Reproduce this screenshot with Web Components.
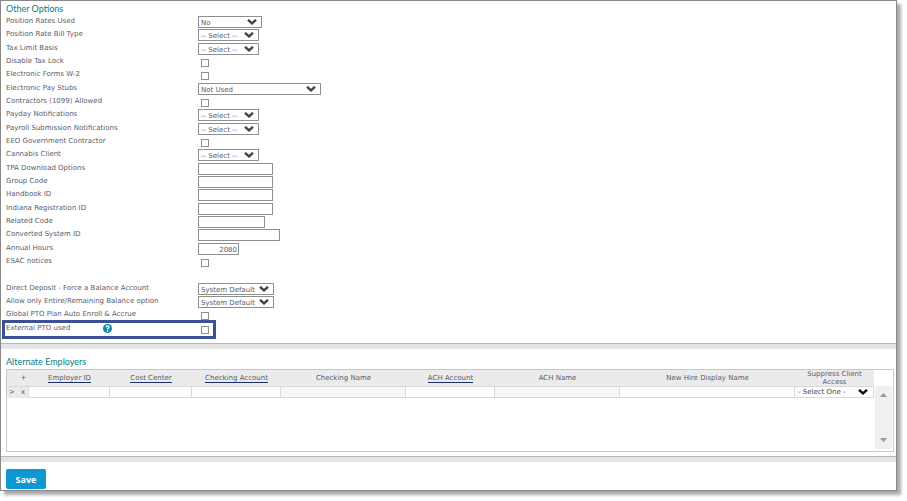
<!DOCTYPE html>
<html lang="en">
<head>
  <meta charset="utf-8">
  <meta name="viewport" content="width=device-width, initial-scale=1">
  <title>Client Options</title>
  <style>
    body {
      margin: 0;
      background: #fff;
      color: #585c6b;
      font-family: "DejaVu Sans", Verdana, sans-serif;
      font-size: 7px;
      --title-font: Lato, "Open Sans", sans-serif;
      --teal: #007f8a;
      --line: #8f8f8f;
    }
  </style>
</head>
<body>
  <client-page>
    <option-section heading="Other Options">
      <option-row label="Position Rates Used" type="select" value="No" size="64"></option-row>
      <option-row label="Position Rate Bill Type" type="select" value="-- Select --" size="61"></option-row>
      <option-row label="Tax Limit Basis" type="select" value="-- Select --" size="61"></option-row>
      <option-row label="Disable Tax Lock" type="checkbox"></option-row>
      <option-row label="Electronic Forms W-2" type="checkbox"></option-row>
      <option-row label="Electronic Pay Stubs" type="select" value="Not Used" size="123"></option-row>
      <option-row label="Contractors (1099) Allowed" type="checkbox"></option-row>
      <option-row label="Payday Notifications" type="select" value="-- Select --" size="61"></option-row>
      <option-row label="Payroll Submission Notifications" type="select" value="-- Select --" size="61"></option-row>
      <option-row label="EEO Government Contractor" type="checkbox"></option-row>
      <option-row label="Cannabis Client" type="select" value="-- Select --" size="61"></option-row>
      <option-row label="TPA Download Options" type="text" size="75"></option-row>
      <option-row label="Group Code" type="text" size="75"></option-row>
      <option-row label="Handbook ID" type="text" size="75"></option-row>
      <option-row label="Indiana Registration ID" type="text" size="75"></option-row>
      <option-row label="Related Code" type="text" size="67"></option-row>
      <option-row label="Converted System ID" type="text" size="82"></option-row>
      <option-row label="Annual Hours" type="text" value="2080" size="41" numeric></option-row>
      <option-row label="ESAC notices" type="checkbox"></option-row>
      <div></div>
      <option-row label="Direct Deposit - Force a Balance Account" type="select" value="System Default" size="76"></option-row>
      <option-row label="Allow only Entire/Remaining Balance option" type="select" value="System Default" size="76"></option-row>
      <option-row label="Global PTO Plan Auto Enroll &amp; Accrue" type="checkbox"></option-row>
      <option-row label="External PTO used" type="checkbox" help highlight></option-row>
    </option-section>
    <section-divider></section-divider>
    <employer-grid heading="Alternate Employers"></employer-grid>
    <section-divider></section-divider>
    <save-bar>Save</save-bar>
  </client-page>

  <script>
    const chevron = /* html */`
      <svg class="chevron" viewBox="0 0 10 6" aria-hidden="true">
        <path d="M1 0.8 L5 4.4 L9 0.8" fill="none" stroke="currentColor" stroke-width="2.4"/>
      </svg>`;

    class ClientPage extends HTMLElement {
      constructor() {
        super();
        this.attachShadow({ mode: "open" });
      }

      static get styles() {
        return /* css */`
          :host {
            display: flow-root;
            padding: 0 10px 10px 0;
          }

          .panel {
            border: 1px solid #888;
            background: #fff;
            box-shadow: 4px 4px 3px #0005;
          }
        `;
      }

      connectedCallback() {
        this.shadowRoot.innerHTML = /* html */`
        <style>${ClientPage.styles}</style>
        <div class="panel"><slot></slot></div>`;
      }
    }

    class OptionSection extends HTMLElement {
      constructor() {
        super();
        this.attachShadow({ mode: "open" });
      }

      static get styles() {
        return /* css */`
          :host {
            display: block;
            padding: 2px 5px 9px;
          }

          h2 {
            margin: 0;
            font-family: var(--title-font);
            font-size: 9px;
            font-weight: 400;
            line-height: 11px;
            color: var(--teal);
          }

          .rows {
            display: grid;
            grid-auto-rows: 13px 14px 13px;
          }
        `;
      }

      connectedCallback() {
        this.shadowRoot.innerHTML = /* html */`
        <style>${OptionSection.styles}</style>
        <h2>${this.getAttribute("heading")}</h2>
        <div class="rows"><slot></slot></div>`;
      }
    }

    class OptionRow extends HTMLElement {
      constructor() {
        super();
        this.attachShadow({ mode: "open" });
      }

      static get styles() {
        return /* css */`
          :host {
            display: grid;
            grid-template-columns: 192px 1fr;
            align-items: start;
            position: relative;
          }

          :host([highlight])::after {
            content: "";
            position: absolute;
            top: -1px;
            left: -4px;
            box-sizing: border-box;
            width: 214px;
            height: 19px;
            border: 3px solid #3b5196;
            pointer-events: none;
          }

          .name {
            display: grid;
            grid-template-columns: 97px auto;
            justify-content: start;
            line-height: 15px;
            white-space: nowrap;
          }

          .help {
            display: flex;
            margin-top: 3px;
            padding: 0;
            border: 0;
            background: none;

            & svg {
              width: 9px;
              height: 9px;
            }
          }

          .control {
            display: flex;
            position: relative;
            width: fit-content;
            margin-top: 2px;
          }

          select,
          .text {
            appearance: none;
            box-sizing: border-box;
            height: 12px;
            margin: 0;
            padding: 1px 2px 0;
            border: 1px solid var(--line);
            border-radius: 0;
            background: #fff;
            color: inherit;
            font: inherit;
          }

          :host([numeric]) .text {
            padding-right: 1px;
            text-align: right;
          }

          .check {
            appearance: none;
            box-sizing: border-box;
            width: 8px;
            height: 8px;
            margin: 3px;
            border: 1px solid var(--line);
            background: #fff;

            &:checked {
              background: #0e98d0;
            }
          }

          .chevron {
            position: absolute;
            top: 3px;
            right: 5px;
            width: 10px;
            height: 6px;
            color: #42454d;
            pointer-events: none;
          }
        `;
      }

      get control() {
        const value = this.getAttribute("value") ?? "";
        const width = `style="width: ${this.getAttribute("size")}px"`;

        switch (this.getAttribute("type")) {
          case "select":
            return `<select id="field" ${width}><option>${value}</option></select>${chevron}`;
          case "checkbox":
            return `<input id="field" class="check" type="checkbox">`;
          default:
            return `<input id="field" class="text" type="text" value="${value}" ${width}>`;
        }
      }

      get help() {
        if (!this.hasAttribute("help")) return "";

        return /* html */`
        <button class="help" type="button" aria-label="Help">
          <svg viewBox="0 0 9 9">
            <circle cx="4.5" cy="4.5" r="4.5" fill="#0a86ad"/>
            <path d="M3 3.4 Q3.1 2 4.5 2 Q6 2 6 3.3 Q6 4 5.2 4.4 Q4.5 4.8 4.5 5.6" fill="none" stroke="#fff" stroke-width="1.3"/>
            <circle cx="4.5" cy="7.1" r="0.8" fill="#fff"/>
          </svg>
        </button>`;
      }

      connectedCallback() {
        this.shadowRoot.innerHTML = /* html */`
        <style>${OptionRow.styles}</style>
        <div class="name">
          <label for="field">${this.getAttribute("label").replace("&", "&amp;")}</label>
          ${this.help}
        </div>
        <div class="control">${this.control}</div>`;
      }
    }

    class SectionDivider extends HTMLElement {
      constructor() {
        super();
        this.attachShadow({ mode: "open" });
      }

      connectedCallback() {
        this.shadowRoot.innerHTML = /* html */`
        <style>
          :host {
            display: block;
            height: 5px;
            border-top: 1px solid #b8b8b8;
            background: #e4e4e4;
          }
        </style>`;
      }
    }

    class EmployerGrid extends HTMLElement {
      constructor() {
        super();
        this.attachShadow({ mode: "open" });
      }

      static get styles() {
        return /* css */`
          :host {
            display: block;
            padding: 7px 2px 4px 5px;
          }

          h2 {
            margin: 0 0 1px;
            font-family: var(--title-font);
            font-size: 9px;
            font-weight: 400;
            line-height: 12px;
            color: var(--teal);
          }

          .frame {
            display: grid;
            grid-template-columns: 1fr 17px;
            column-gap: 1px;
            padding-right: 1px;
            border: 1px solid #c8c8c8;
          }

          table {
            width: 100%;
            table-layout: fixed;
            border-collapse: separate;
            border-spacing: 0;
          }

          col {
            width: var(--w);
          }

          th,
          td {
            box-sizing: border-box;
            padding: 0;
            border-bottom: 1px solid #d8d8d8;
            font-weight: 400;
            text-align: center;
          }

          th {
            height: 17px;
            background: #ebebeb;
            line-height: 8px;
          }

          td {
            height: 11px;
            border-right: 1px solid #d8d8d8;
            line-height: 10px;
          }

          .tool {
            border-color: #ebebeb;
            background: #ebebeb;
          }

          .tool:nth-child(2) {
            border-right-color: #d8d8d8;
          }

          a {
            border-bottom: 1px solid #1c2f70;
            color: inherit;
            text-decoration: none;
          }

          button,
          input,
          select {
            appearance: none;
            display: block;
            box-sizing: border-box;
            width: 100%;
            height: 10px;
            margin: 0;
            padding: 0;
            border: 0;
            border-radius: 0;
            background: none;
            color: inherit;
            font: inherit;
          }

          input:disabled {
            background: #f7f7f7;
          }

          .pick {
            position: relative;
            color: #42454d;

            & select {
              padding-left: 3px;
            }

            & .chevron {
              position: absolute;
              top: 2px;
              right: 5px;
              width: 10px;
              height: 6px;
              color: #111;
              pointer-events: none;
            }
          }

          .scroll {
            display: flex;
            flex-direction: column;
            justify-content: space-between;
            align-items: center;
            height: 63px;
            margin: 16px 0 2px;
            padding: 7px 0;
            box-sizing: border-box;
            background: #f0f0f0;

            & svg {
              width: 7px;
              height: 4px;
              fill: #999;
            }
          }
        `;
      }

      get columns() {
        return [
          { name: "Employer ID", width: "81px", link: true },
          { name: "Cost Center", width: "82px", link: true },
          { name: "Checking Account", width: "89px", link: true },
          { name: "Checking Name", width: "125px", locked: true },
          { name: "ACH Account", width: "89px", link: true },
          { name: "ACH Name", width: "125px", locked: true },
          { name: "New Hire Display Name", width: "auto" }
        ];
      }

      connectedCallback() {
        const cols = this.columns.map(({ width }) => `<col style="--w: ${width}">`).join("");
        const heads = this.columns.map(({ name, link }) =>
          `<th scope="col">${link ? `<a href="#">${name}</a>` : name}</th>`).join("");
        const cells = this.columns.map(({ name, locked }) =>
          `<td><input type="text" aria-label="${name}" ${locked ? "disabled" : ""}></td>`).join("");

        this.shadowRoot.innerHTML = /* html */`
        <style>${EmployerGrid.styles}</style>
        <h2>${this.getAttribute("heading")}</h2>
        <div class="frame">
          <div>
            <table>
              <colgroup>
                <col style="--w: 11px"><col style="--w: 11px">${cols}<col style="--w: 79px">
              </colgroup>
              <thead>
                <tr>
                  <th></th>
                  <th><button type="button">+</button></th>
                  ${heads}
                  <th scope="col">Suppress Client Access</th>
                </tr>
              </thead>
              <tbody>
                <tr>
                  <td class="tool">&gt;</td>
                  <td class="tool"><button type="button">x</button></td>
                  ${cells}
                  <td class="pick">
                    <select aria-label="Suppress Client Access"><option>- Select One -</option></select>
                    ${chevron}
                  </td>
                </tr>
              </tbody>
            </table>
          </div>
          <div class="scroll" aria-hidden="true">
            <svg viewBox="0 0 7 4"><path d="M0 4 L3.5 0 L7 4 Z"/></svg>
            <svg viewBox="0 0 7 4"><path d="M0 0 L3.5 4 L7 0 Z"/></svg>
          </div>
        </div>`;
      }
    }

    class SaveBar extends HTMLElement {
      constructor() {
        super();
        this.attachShadow({ mode: "open" });
      }

      static get styles() {
        return /* css */`
          :host {
            display: flex;
            padding: 7px 5px 1px;
          }

          button {
            width: 40px;
            height: 20px;
            padding: 0;
            border: 0;
            border-radius: 2px;
            background: #0e98d0;
            color: #fff;
            font-family: "Open Sans", sans-serif;
            font-size: 9px;
            font-weight: 700;
          }
        `;
      }

      connectedCallback() {
        this.shadowRoot.innerHTML = /* html */`
        <style>${SaveBar.styles}</style>
        <button type="button"><slot></slot></button>`;
      }
    }

    customElements.define("client-page", ClientPage);
    customElements.define("option-section", OptionSection);
    customElements.define("option-row", OptionRow);
    customElements.define("section-divider", SectionDivider);
    customElements.define("employer-grid", EmployerGrid);
    customElements.define("save-bar", SaveBar);
  </script>
</body>
</html>
